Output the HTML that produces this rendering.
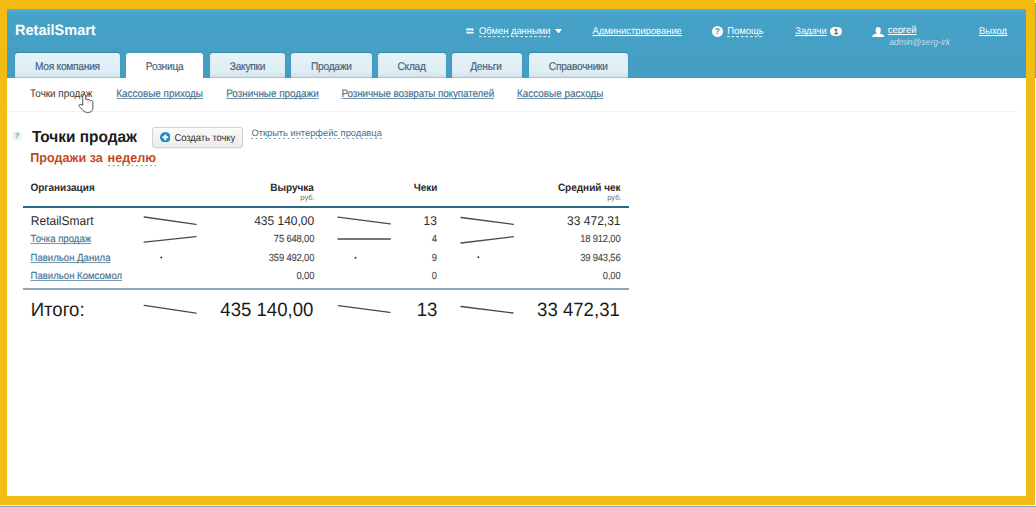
<!DOCTYPE html>
<html><head><meta charset="utf-8">
<style>
html,body{margin:0;padding:0}
body{width:1036px;height:507px;overflow:hidden;background:#F2BC15;position:relative;font-family:"Liberation Sans",sans-serif}
.t{position:absolute;white-space:nowrap;text-decoration-skip-ink:none;text-rendering:geometricPrecision}
.a{position:absolute}
.mk{display:inline-block;width:0;height:0;vertical-align:baseline}
#frame{left:7px;top:9px;width:1019px;height:487px;background:#fff}
#hdr{left:7px;top:9px;width:1019px;height:69.3px;background:linear-gradient(#4db4e2 0px,#4aa8d0 3px,#46a1c6 10px,#449ec2 69.3px)}
.tab{top:52.8px;height:25.5px;border-radius:3px 3px 0 0;background:linear-gradient(#e6f2f8,#dfedf4 75%,#cfe1ea);box-shadow:inset 0 -1px 1px rgba(100,150,170,.35),0 -0.5px 1px rgba(30,100,130,.35)}
.tab.act{background:#fff;box-shadow:none}
.sl{height:1.3px;background:#454545;transform-origin:0 50%}
.dot{width:2px;height:2px;background:#444;border-radius:1px}
</style></head><body>
<div id="frame" class="a"></div>
<div class="a" style="left:1035px;top:0;width:1px;height:505px;background:#fbfbf8"></div>
<div class="a" style="left:1035px;top:3px;width:1px;height:75px;background:#4aaedb"></div>
<div class="a" style="left:0;top:505px;width:1036px;height:1px;background:#f4f7fa"></div>
<div class="a" style="left:0;top:506px;width:1036px;height:1px;background:#8ba6bc"></div>
<div id="hdr" class="a"></div>
<!-- tabs -->
<div class="a tab" style="left:15px;width:105.2px"></div>
<div class="a tab act" style="left:125.7px;width:77.6px"></div>
<div class="a tab" style="left:209.7px;width:75.5px"></div>
<div class="a tab" style="left:291.3px;width:80.7px"></div>
<div class="a tab" style="left:377.8px;width:67.8px"></div>
<div class="a tab" style="left:451.6px;width:70.9px"></div>
<div class="a tab" style="left:529px;width:98.5px"></div>
<!-- header icons -->
<svg class="a" style="left:465px;top:27px" width="10" height="8" viewBox="0 0 10 8"><path d="M1.1 1.6H7.2V0.9L9 2.4L7.2 3.9V3.2H1.1Z M8.6 4.8H2.8V4.1L1 5.6L2.8 7.1V6.4H8.6Z" fill="#fff"/></svg>
<svg class="a" style="left:555px;top:28.5px" width="7" height="4.5" viewBox="0 0 7 4.5"><path d="M0 0H7L3.5 4.5Z" fill="#fff"/></svg>
<div class="a" style="left:711.6px;top:25.6px;width:11.6px;height:11.2px;border-radius:50%;background:#f7fafb;color:#6f8790;font-size:8.5px;font-weight:bold;text-align:center;line-height:11.4px">?</div>
<div class="a" style="left:830px;top:26.6px;width:12.4px;height:9.4px;border-radius:5px;background:#fdfbf6;color:#4a4a4a;font-size:7.5px;font-weight:normal;text-align:center;line-height:9.6px;-webkit-text-stroke:0.3px #4a4a4a">1</div>
<svg class="a" style="left:872.4px;top:26.5px" width="12.4" height="10.4" viewBox="0 0 12.4 10.4"><path d="M3.6 3.2C3.6 1.2 4.6 0 6.2 0C7.8 0 8.8 1.2 8.8 3.2C8.8 4.8 8.2 6 7.6 6.6C10.4 7 12.2 8 12.4 10.4H0C0.2 8 2 7 4.8 6.6C4.2 6 3.6 4.8 3.6 3.2Z" fill="#fff"/></svg>
<!-- subnav line -->
<div class="a" style="left:7px;top:110.8px;width:1010.5px;height:1px;background:#edf1f3"></div>
<!-- help icon -->
<div class="a" style="left:12.3px;top:131px;width:9.6px;height:9.6px;border-radius:50%;background:#e8f3f6;color:#5f9ba6;font-size:7.5px;font-weight:bold;text-align:center;line-height:9.6px">?</div>
<!-- button -->
<div class="a" style="left:152.2px;top:127.3px;width:90.7px;height:20.4px;box-sizing:border-box;border:1px solid #d2d2d2;border-radius:3px;background:linear-gradient(#fbfbfb,#ececec);box-shadow:0 1px 0 rgba(0,0,0,.05)"></div>
<svg class="a" style="left:159.9px;top:131.8px" width="10.6" height="10.6" viewBox="0 0 10.6 10.6"><circle cx="5.3" cy="5.3" r="5.3" fill="#1b8bc9"/><path d="M5.3 2.4V8.2M2.4 5.3H8.2" stroke="#fff" stroke-width="2"/></svg>
<!-- table lines -->
<div class="a" style="left:22.9px;top:205.6px;width:606px;height:2px;background:#2f6686"></div>
<div class="a" style="left:22.9px;top:288px;width:606px;height:1.8px;background:#8ca7b6"></div>
<!-- sparklines -->
<svg class="a" style="left:0;top:0" width="1036" height="507" viewBox="0 0 1036 507">
<g stroke="#4a4a4a" stroke-width="1.35" fill="none" stroke-linecap="round">
<path d="M144.2 217L196 224.3M144.2 242.1L196 236.6M144.2 305.4L196 313.2"/>
<path d="M338 217.1L390.3 223.9M338 239L390.3 239M338.4 305.6L389.8 312.4"/>
<path d="M461 217.5L513.3 224.3M461 243L513.3 236.7M461 306.5L513.1 313"/>
</g>
<g fill="#333"><circle cx="161.3" cy="257.5" r="1"/><circle cx="355.5" cy="257.8" r="1"/><circle cx="478.4" cy="257.3" r="1"/></g>
</svg>
<div id="logo" class="t" style="left:15.08px; top:24.35px;line-height:14.50px;transform:scaleY(1.030);transform-origin:0 12.47px;font-size:14.5px;font-weight:bold;color:#fff;">RetailSmart</div>
<div id="obmen" class="t" style="left:479.04px; top:25.71px;line-height:9.40px;transform:scaleY(1.040);transform-origin:0 8.08px;font-size:9.4px;color:#fff;padding-bottom:1.59px;background-image:linear-gradient(to right,rgba(255,255,255,.85) 50%,transparent 50%);background-size:4.60px 1px;background-repeat:repeat-x;background-position:0 100%;">Обмен данными</div>
<div id="admin" class="t" style="left:592.44px; top:25.71px;line-height:9.40px;transform:scaleY(1.040);transform-origin:0 8.08px;font-size:9.4px;color:#fff;text-decoration:underline;">Администрирование</div>
<div id="help" class="t" style="left:727.34px; top:25.71px;line-height:9.40px;transform:scaleY(1.040);transform-origin:0 8.08px;font-size:9.4px;color:#fff;padding-bottom:1.89px;background-image:linear-gradient(to right,rgba(255,255,255,.85) 50%,transparent 50%);background-size:4.60px 1px;background-repeat:repeat-x;background-position:0 100%;">Помощь</div>
<div id="tasks" class="t" style="left:795.24px; top:25.71px;line-height:9.40px;transform:scaleY(1.040);transform-origin:0 8.08px;font-size:9.4px;color:#fff;text-decoration:underline;">Задачи</div>
<div id="user" class="t" style="left:887.74px; top:25.41px;line-height:9.40px;transform:scaleY(1.040);transform-origin:0 8.08px;font-size:9.4px;color:#fff;text-decoration:underline;">сергей</div>
<div id="email" class="t" style="left:889.20px; top:38.33px;line-height:8.60px;transform:scaleY(1.040);transform-origin:0 7.40px;font-size:8.6px;font-style:italic;color:#c9dfea;">admin@serg-irk</div>
<div id="exit" class="t" style="left:979.04px; top:25.81px;line-height:9.40px;transform:scaleY(1.040);transform-origin:0 8.08px;font-size:9.4px;color:#fff;text-decoration:underline;">Выход</div>
<div id="tab0" class="t" style="left:34.99px; top:62.78px;line-height:10.20px;transform:scaleY(1.100);transform-origin:0 8.77px;font-size:10.2px;color:#46627a;letter-spacing:-0.25px;-webkit-text-stroke:0.15px #46627a;">Моя компания</div>
<div id="tab1" class="t" style="left:145.79px; top:62.78px;line-height:10.20px;transform:scaleY(1.100);transform-origin:0 8.77px;font-size:10.2px;color:#46627a;letter-spacing:-0.25px;-webkit-text-stroke:0.15px #46627a;">Розница</div>
<div id="tab2" class="t" style="left:229.79px; top:62.78px;line-height:10.20px;transform:scaleY(1.100);transform-origin:0 8.77px;font-size:10.2px;color:#46627a;letter-spacing:-0.25px;-webkit-text-stroke:0.15px #46627a;">Закупки</div>
<div id="tab3" class="t" style="left:310.99px; top:62.78px;line-height:10.20px;transform:scaleY(1.100);transform-origin:0 8.77px;font-size:10.2px;color:#46627a;letter-spacing:-0.25px;-webkit-text-stroke:0.15px #46627a;">Продажи</div>
<div id="tab4" class="t" style="left:397.49px; top:62.78px;line-height:10.20px;transform:scaleY(1.100);transform-origin:0 8.77px;font-size:10.2px;color:#46627a;letter-spacing:-0.25px;-webkit-text-stroke:0.15px #46627a;">Склад</div>
<div id="tab5" class="t" style="left:470.19px; top:62.78px;line-height:10.20px;transform:scaleY(1.100);transform-origin:0 8.77px;font-size:10.2px;color:#46627a;letter-spacing:-0.25px;-webkit-text-stroke:0.15px #46627a;">Деньги</div>
<div id="tab6" class="t" style="left:548.79px; top:62.78px;line-height:10.20px;transform:scaleY(1.100);transform-origin:0 8.77px;font-size:10.2px;color:#46627a;letter-spacing:-0.25px;-webkit-text-stroke:0.15px #46627a;">Справочники</div>
<div id="sn0" class="t" style="left:30.11px; top:90.16px;line-height:9.90px;transform:scaleY(1.100);transform-origin:0 8.51px;font-size:9.9px;color:#333;">Точки продаж</div>
<div id="sn1" class="t" style="left:116.31px; top:90.16px;line-height:9.90px;transform:scaleY(1.100);transform-origin:0 8.51px;font-size:9.9px;color:#416e8c;text-decoration:underline;text-underline-offset:0.6px;text-decoration-color:rgba(65,110,140,.7);-webkit-text-stroke:0.12px #416e8c;">Кассовые приходы</div>
<div id="sn2" class="t" style="left:226.21px; top:90.16px;line-height:9.90px;transform:scaleY(1.100);transform-origin:0 8.51px;font-size:9.9px;color:#416e8c;text-decoration:underline;text-underline-offset:0.6px;text-decoration-color:rgba(65,110,140,.7);-webkit-text-stroke:0.12px #416e8c;">Розничные продажи</div>
<div id="sn3" class="t" style="left:341.51px; top:90.16px;line-height:9.90px;transform:scaleY(1.100);transform-origin:0 8.51px;font-size:9.9px;color:#416e8c;text-decoration:underline;text-underline-offset:0.6px;text-decoration-color:rgba(65,110,140,.7);-webkit-text-stroke:0.12px #416e8c;letter-spacing:-0.1px;">Розничные возвраты покупателей</div>
<div id="sn4" class="t" style="left:517.11px; top:90.16px;line-height:9.90px;transform:scaleY(1.100);transform-origin:0 8.51px;font-size:9.9px;color:#416e8c;text-decoration:underline;text-underline-offset:0.6px;text-decoration-color:rgba(65,110,140,.7);-webkit-text-stroke:0.12px #416e8c;">Кассовые расходы</div>
<div id="title" class="t" style="left:31.92px; top:130.36px;line-height:15.40px;transform:scaleY(1.040);transform-origin:0 13.24px;font-size:15.4px;font-weight:bold;color:#1b1b1b;">Точки продаж</div>
<div id="btn" class="t" style="left:174.44px; top:134.17px;line-height:9.50px;transform:scaleY(1.060);transform-origin:0 8.17px;font-size:9.5px;color:#333;letter-spacing:-0.1px;">Создать точку</div>
<div id="open" class="t" style="left:251.45px; top:129.30px;line-height:9.30px;font-size:9.3px;color:#3e6f8d;padding-bottom:0.70px;background-image:linear-gradient(to right,#7b98aa 45%,transparent 45%);background-size:4.60px 1px;background-repeat:repeat-x;background-position:0 100%;">Открыть интерфейс продавца</div>
<div id="week1" class="t" style="left:30.22px; top:152.34px;line-height:12.60px;transform:scaleY(1.030);transform-origin:0 10.84px;font-size:12.6px;font-weight:bold;color:#c2481c;">Продажи за </div>
<div id="week2" class="t" style="left:107.62px; top:152.34px;line-height:12.60px;transform:scaleY(1.030);transform-origin:0 10.84px;font-size:12.6px;font-weight:bold;color:#c2481c;padding-bottom:0.96px;background-image:linear-gradient(to right,#c9775a 45%,transparent 45%);background-size:4.70px 1px;background-repeat:repeat-x;background-position:0 100%;">неделю</div>
<div id="th0" class="t" style="left:30.40px; top:183.51px;line-height:10.00px;transform:scaleY(1.060);transform-origin:0 8.60px;font-size:10px;font-weight:bold;color:#2a2a2a;">Организация</div>
<div id="th1" class="t" style="right:722.10px; top:183.51px;line-height:10.00px;transform:scaleY(1.060);transform-origin:0 8.60px;font-size:10px;font-weight:bold;color:#2a2a2a;">Выручка</div>
<div id="th2" class="t" style="right:598.50px; top:183.51px;line-height:10.00px;transform:scaleY(1.060);transform-origin:0 8.60px;font-size:10px;font-weight:bold;color:#2a2a2a;">Чеки</div>
<div id="th3" class="t" style="right:415.40px; top:183.51px;line-height:10.00px;transform:scaleY(1.060);transform-origin:0 8.60px;font-size:10px;font-weight:bold;color:#2a2a2a;">Средний чек</div>
<div id="rub1" class="t" style="right:721.20px; top:194.10px;line-height:7.60px;font-size:7.6px;color:#6c6c6c;">руб.</div>
<div id="rub3" class="t" style="right:414.40px; top:194.10px;line-height:7.60px;font-size:7.6px;color:#6c6c6c;">руб.</div>
<div id="r1a" class="t" style="left:30.86px; top:215.03px;line-height:12.00px;transform:scaleY(1.060);transform-origin:0 10.32px;font-size:12px;color:#2b2b2b;">RetailSmart</div>
<div id="r1b" class="t" style="right:721.80px; top:215.03px;line-height:12.00px;transform:scaleY(1.060);transform-origin:0 10.32px;font-size:12px;color:#2b2b2b;">435 140,00</div>
<div id="r1c" class="t" style="right:599.10px; top:215.03px;line-height:12.00px;transform:scaleY(1.060);transform-origin:0 10.32px;font-size:12px;color:#2b2b2b;">13</div>
<div id="r1d" class="t" style="right:415.50px; top:215.03px;line-height:12.00px;transform:scaleY(1.060);transform-origin:0 10.32px;font-size:12px;color:#2b2b2b;">33 472,31</div>
<div id="r2a" class="t" style="left:30.53px; top:235.31px;line-height:9.60px;transform:scaleY(1.080);transform-origin:0 8.26px;font-size:9.6px;color:#46708c;text-decoration:underline;text-underline-offset:0.6px;text-decoration-color:rgba(70,112,140,.7);-webkit-text-stroke:0.12px #46708c;">Точка продаж</div>
<div id="r2b" class="t" style="right:721.80px; top:234.21px;line-height:9.40px;transform:scaleY(1.100);transform-origin:0 8.08px;font-size:9.4px;color:#444;letter-spacing:-0.15px;-webkit-text-stroke:0.1px #444;">75 648,00</div>
<div id="r2c" class="t" style="right:599.10px; top:234.21px;line-height:9.40px;transform:scaleY(1.100);transform-origin:0 8.08px;font-size:9.4px;color:#444;letter-spacing:-0.15px;-webkit-text-stroke:0.1px #444;">4</div>
<div id="r2d" class="t" style="right:415.50px; top:234.21px;line-height:9.40px;transform:scaleY(1.100);transform-origin:0 8.08px;font-size:9.4px;color:#444;letter-spacing:-0.15px;-webkit-text-stroke:0.1px #444;">18 912,00</div>
<div id="r3a" class="t" style="left:30.53px; top:254.00px;line-height:9.60px;transform:scaleY(1.080);transform-origin:0 8.26px;font-size:9.6px;color:#46708c;text-decoration:underline;text-underline-offset:0.6px;text-decoration-color:rgba(70,112,140,.7);-webkit-text-stroke:0.12px #46708c;">Павильон Данила</div>
<div id="r3b" class="t" style="right:721.80px; top:252.91px;line-height:9.40px;transform:scaleY(1.100);transform-origin:0 8.08px;font-size:9.4px;color:#444;letter-spacing:-0.15px;-webkit-text-stroke:0.1px #444;">359 492,00</div>
<div id="r3c" class="t" style="right:599.10px; top:252.91px;line-height:9.40px;transform:scaleY(1.100);transform-origin:0 8.08px;font-size:9.4px;color:#444;letter-spacing:-0.15px;-webkit-text-stroke:0.1px #444;">9</div>
<div id="r3d" class="t" style="right:415.50px; top:252.91px;line-height:9.40px;transform:scaleY(1.100);transform-origin:0 8.08px;font-size:9.4px;color:#444;letter-spacing:-0.15px;-webkit-text-stroke:0.1px #444;">39 943,56</div>
<div id="r4a" class="t" style="left:30.53px; top:271.70px;line-height:9.60px;transform:scaleY(1.080);transform-origin:0 8.26px;font-size:9.6px;color:#46708c;text-decoration:underline;text-underline-offset:0.6px;text-decoration-color:rgba(70,112,140,.7);-webkit-text-stroke:0.12px #46708c;">Павильон Комсомол</div>
<div id="r4b" class="t" style="right:721.80px; top:270.61px;line-height:9.40px;transform:scaleY(1.100);transform-origin:0 8.08px;font-size:9.4px;color:#444;letter-spacing:-0.15px;-webkit-text-stroke:0.1px #444;">0,00</div>
<div id="r4c" class="t" style="right:599.10px; top:270.61px;line-height:9.40px;transform:scaleY(1.100);transform-origin:0 8.08px;font-size:9.4px;color:#444;letter-spacing:-0.15px;-webkit-text-stroke:0.1px #444;">0</div>
<div id="r4d" class="t" style="right:415.50px; top:270.61px;line-height:9.40px;transform:scaleY(1.100);transform-origin:0 8.08px;font-size:9.4px;color:#444;letter-spacing:-0.15px;-webkit-text-stroke:0.1px #444;">0,00</div>
<div id="ta" class="t" style="left:30.70px; top:301.34px;line-height:18.60px;transform:scaleY(1.040);transform-origin:0 16.00px;font-size:18.6px;color:#1b1b1b;">Итого:</div>
<div id="tb" class="t" style="right:722.60px; top:301.34px;line-height:18.60px;transform:scaleY(1.040);transform-origin:0 16.00px;font-size:18.6px;color:#1b1b1b;">435 140,00</div>
<div id="tc" class="t" style="right:598.70px; top:301.34px;line-height:18.60px;transform:scaleY(1.040);transform-origin:0 16.00px;font-size:18.6px;color:#1b1b1b;">13</div>
<div id="td" class="t" style="right:416.20px; top:301.34px;line-height:18.60px;transform:scaleY(1.040);transform-origin:0 16.00px;font-size:18.6px;color:#1b1b1b;">33 472,31</div>
<!-- cursor -->
<svg class="a" style="left:72px;top:86px" width="30" height="30" viewBox="0 0 507 507">
<path d="M182 322L182 170Q182 146 207 146Q232 146 232 170L232 228Q252 214 270 232Q292 224 308 244Q338 236 353 262L353 382Q346 446 262 448Q214 448 186 414L124 346Q108 326 128 312Q152 298 182 328Z" fill="#fff" stroke="#3c3c3c" stroke-width="15" stroke-linejoin="round"/>
<path d="M270 232V290M308 244V290" stroke="#8a8a8a" stroke-width="8"/>
</svg>
</body></html>
